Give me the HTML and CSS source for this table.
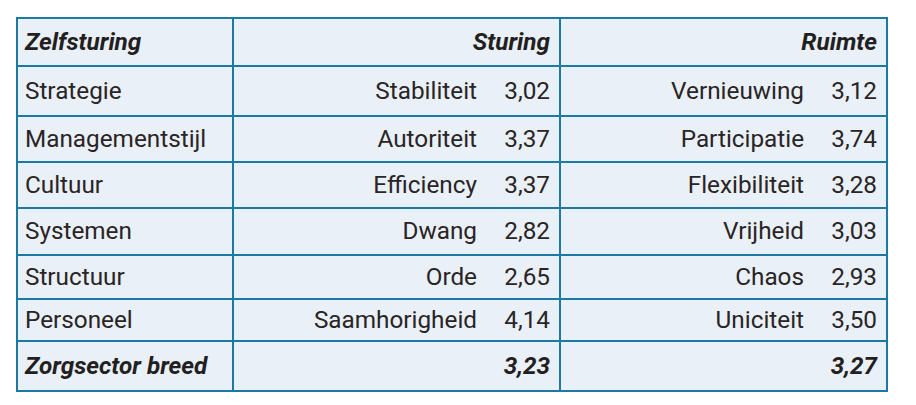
FILE: index.html
```html
<!DOCTYPE html>
<html lang="nl">
<head>
<meta charset="utf-8">
<title>Zelfsturing</title>
<link rel="stylesheet" href="styles.css">
</head>
<body>
<table class="scores">
  <colgroup>
    <col class="c-name">
    <col class="c-label">
    <col class="c-num">
    <col class="c-label">
    <col class="c-num">
  </colgroup>
  <thead>
    <tr class="r1">
      <th class="name strong">Zelfsturing</th>
      <th class="head strong" colspan="2">Sturing</th>
      <th class="head strong" colspan="2">Ruimte</th>
    </tr>
  </thead>
  <tbody>
    <tr class="r2">
      <td class="name">Strategie</td>
      <td class="label">Stabiliteit</td><td class="num">3,02</td>
      <td class="label">Vernieuwing</td><td class="num">3,12</td>
    </tr>
    <tr class="r3">
      <td class="name">Managementstijl</td>
      <td class="label">Autoriteit</td><td class="num">3,37</td>
      <td class="label">Participatie</td><td class="num">3,74</td>
    </tr>
    <tr class="r4">
      <td class="name">Cultuur</td>
      <td class="label">Efficiency</td><td class="num">3,37</td>
      <td class="label">Flexibiliteit</td><td class="num">3,28</td>
    </tr>
    <tr class="r5">
      <td class="name">Systemen</td>
      <td class="label">Dwang</td><td class="num">2,82</td>
      <td class="label">Vrijheid</td><td class="num">3,03</td>
    </tr>
    <tr class="r6">
      <td class="name">Structuur</td>
      <td class="label">Orde</td><td class="num">2,65</td>
      <td class="label">Chaos</td><td class="num">2,93</td>
    </tr>
    <tr class="r7">
      <td class="name">Personeel</td>
      <td class="label">Saamhorigheid</td><td class="num">4,14</td>
      <td class="label">Uniciteit</td><td class="num">3,50</td>
    </tr>
    <tr class="r8">
      <td class="name strong">Zorgsector breed</td>
      <td class="label"></td><td class="num strong">3,23</td>
      <td class="label"></td><td class="num strong">3,27</td>
    </tr>
  </tbody>
</table>
</body>
</html>
```

FILE: styles.css
```css
html, body {
  margin: 0;
  padding: 0;
  background: #ffffff;
}

body {
  font-family: Roboto, "Liberation Sans", sans-serif;
  color: #2a2425;
}

.scores {
  margin: 17px 0 0 16px;
  width: 872px;
  table-layout: fixed;
  border-collapse: separate;
  border-spacing: 0;
  border-top: 2px solid #1a7aa3;
  border-left: 2px solid #1a7aa3;
  background: #e9f0f8;
  font-size: 24.3px;
  line-height: 1;
}

.c-name { width: 216px; }
.c-label { width: 243px; }
.c-num { width: 84px; }

.scores th,
.scores td {
  padding: 0;
  border-bottom: 2px solid #1a7aa3;
  vertical-align: middle;
  font-weight: 400;
  white-space: nowrap;
  box-sizing: border-box;
}

.scores .name {
  text-align: left;
  padding-left: 7px;
  border-right: 2px solid #1a7aa3;
}

.scores .head {
  text-align: right;
  padding-right: 9px;
  border-right: 2px solid #1a7aa3;
}

.scores .label {
  text-align: right;
  padding-right: 0;
}

.scores .num {
  text-align: right;
  padding-right: 9px;
  border-right: 2px solid #1a7aa3;
}

.scores .strong {
  font-weight: 700;
  font-style: italic;
  color: #231f20;
}

.r1 { height: 48px; }
.r2 { height: 50px; }
.r3 { height: 46px; }
.r4 { height: 46px; }
.r5 { height: 47px; }
.r6 { height: 44px; }
.r7 { height: 42px; }
.r8 { height: 50px; }
```
